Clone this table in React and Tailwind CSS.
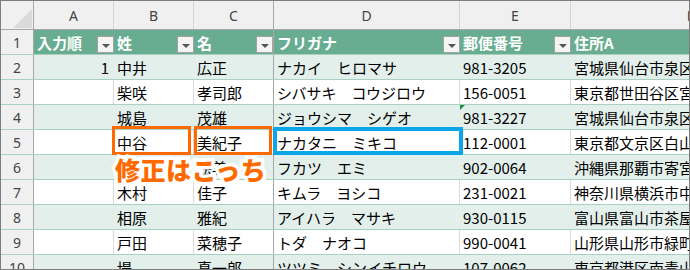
import React from 'react';

const cols = ['A', 'B', 'C', 'D', 'E', 'F'];
const widths = ['w-[80px]', 'w-[80px]', 'w-[80px]', 'w-[186px]', 'w-[111px]', 'w-[240px]'];
const headers = ['入力順', '姓', '名', 'フリガナ', '郵便番号', '住所A'];

const rows = [
  ['1', '中井', '広正', 'ナカイ　ヒロマサ', '981-3205', '宮城県仙台市泉区泉中央'],
  ['', '柴咲', '孝司郎', 'シバサキ　コウジロウ', '156-0051', '東京都世田谷区宮坂'],
  ['', '城島', '茂雄', 'ジョウシマ　シゲオ', '981-3227', '宮城県仙台市泉区'],
  ['', '中谷', '美紀子', 'ナカタニ　ミキコ', '112-0001', '東京都文京区白山'],
  ['', '深津', '絵美', 'フカツ　エミ', '902-0064', '沖縄県那覇市寄宮'],
  ['', '木村', '佳子', 'キムラ　ヨシコ', '231-0021', '神奈川県横浜市中区'],
  ['', '相原', '雅紀', 'アイハラ　マサキ', '930-0115', '富山県富山市茶屋町'],
  ['', '戸田', '菜穂子', 'トダ　ナオコ', '990-0041', '山形県山形市緑町'],
  ['', '堤', '真一郎', 'ツツミ　シンイチロウ', '107-0062', '東京都港区南青山'],
];

const FilterButton = () => (
  <div className="w-[17px] h-[17px] mb-[1px] shrink-0 bg-[#f4f4f4] border border-[#a3a3a3] flex items-center justify-center pt-[3px]">
    <div className="w-0 h-0 border-l-[4px] border-r-[4px] border-t-[4px] border-l-transparent border-r-transparent border-t-[#555]" />
  </div>
);

const App = () => {
  return (
    <div className="relative w-[690px] h-[270px] overflow-hidden bg-white border border-[#7d7d7d] font-['Noto_Sans_CJK_JP',sans-serif] text-[15px] text-black">
      {/* column letters */}
      <div className="flex h-[29px] bg-[#f0f0f0] border-b border-[#a8a8a8]">
        <div className="relative w-[33px] shrink-0 border-r border-[#a8a8a8]">
          <div className="absolute right-[1px] bottom-[1px] w-0 h-0 border-b-[19px] border-l-[19px] border-l-transparent border-b-[#dadada]" />
        </div>
        {cols.map((c, i) => (
          <div
            key={c}
            className={`${widths[i]} shrink-0 flex items-center justify-center font-['Noto_Sans',sans-serif] text-[14px] text-[#444] ${i === 2 ? 'border-r border-[#a8a8a8]' : 'border-r border-[#d5d5d5]'}`}
          >
            {c}
          </div>
        ))}
      </div>

      {/* table header row */}
      <div className="flex h-[25px] border-b border-[#a9d0c1]">
        <div className="w-[33px] shrink-0 bg-[#f0f0f0] border-r border-[#a8a8a8] flex items-center justify-center font-['Noto_Sans',sans-serif] text-[14px] text-[#444]">
          1
        </div>
        {headers.map((h, i) => (
          <div
            key={h}
            className={`${widths[i]} shrink-0 bg-[#68ad92] flex items-end justify-between ${i === 2 ? 'border-r border-[#a8a8a8]' : ''}`}
          >
            <span className="self-center pl-[3px] font-bold text-white whitespace-nowrap leading-none">{h}</span>
            {i < 5 && <FilterButton />}
          </div>
        ))}
      </div>

      {/* data rows */}
      {rows.map((r, ri) => {
        const band = ri % 2 === 0;
        return (
          <div key={ri} className="flex h-[25px] border-b border-[#a9d0c1]">
            <div className="w-[33px] shrink-0 bg-[#f0f0f0] border-r border-[#a8a8a8] flex items-center justify-center font-['Noto_Sans',sans-serif] text-[14px] text-[#444]">
              {ri + 2}
            </div>
            {r.map((v, ci) => (
              <div
                key={ci}
                className={`relative ${widths[ci]} shrink-0 flex items-center whitespace-nowrap overflow-hidden leading-none ${
                  band ? 'bg-[#e2efea]' : 'bg-white'
                } ${
                  ci === 2
                    ? 'border-r border-[#a8a8a8]'
                    : band
                    ? 'border-r border-[#e2efea]'
                    : 'border-r border-[#dadada]'
                } ${ci === 0 ? 'justify-end pr-[4px]' : 'pl-[3px]'}`}
              >
                {ri === 2 && ci === 4 && (
                  <div className="absolute left-0 top-0 w-0 h-0 border-t-[5px] border-r-[5px] border-t-[#1e8a44] border-r-transparent" />
                )}
                {v}
              </div>
            ))}
          </div>
        );
      })}

      {/* highlight boxes */}
      <div className="absolute left-[111px] top-[125px] w-[79px] h-[29px] border-[3px] border-[#ff6a00]" />
      <div className="absolute left-[193px] top-[125px] w-[78px] h-[29px] border-[3px] border-[#ff6a00]" />
      <div className="absolute left-[272px] top-[126px] w-[190px] h-[28px] border-[4px] border-[#0aa7e8]" />

      {/* callout */}
      <div className="absolute left-[114px] top-[156px] text-[25px] tracking-[0.5px] leading-none font-black text-[#ff6a00] whitespace-nowrap [-webkit-text-stroke:7px_white] [paint-order:stroke_fill]">
        修正はこっち
      </div>
    </div>
  );
};

export default App;
